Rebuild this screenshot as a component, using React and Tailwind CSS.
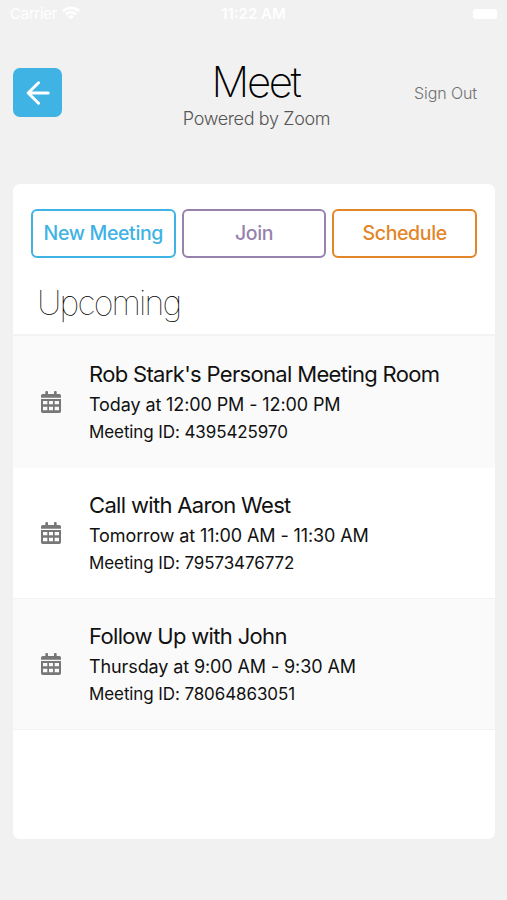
const meetings = [
  {
    title: "Rob Stark's Personal Meeting Room",
    time: "Today at 12:00 PM - 12:00 PM",
    id: "4395425970",
    row: "h-[132px] bg-[#fafafa]",
  },
  {
    title: "Call with Aaron West",
    time: "Tomorrow at 11:00 AM - 11:30 AM",
    id: "79573476772",
    row: "h-[130px] bg-white",
  },
  {
    title: "Follow Up with John",
    time: "Thursday at 9:00 AM - 9:30 AM",
    id: "78064863051",
    row: "h-[132px] border-y border-[#f3f3f3] bg-[#fafafa]",
  },
];

function CalendarIcon() {
  return (
    <svg className="ml-7 h-[22px] w-5 shrink-0" viewBox="0 0 60 66" fill="#777">
      <path d="M5 9h8V3a3 3 0 0 1 3-3h2a3 3 0 0 1 3 3v6h18V3a3 3 0 0 1 3-3h2a3 3 0 0 1 3 3v6h8a5 5 0 0 1 5 5v6H0v-6a5 5 0 0 1 5-5Z" />
      <path
        fillRule="evenodd"
        d="M0 24h60v37a5 5 0 0 1-5 5H5a5 5 0 0 1-5-5ZM6 30v10h13v-10ZM24 30v10h12v-10ZM41 30v10h13v-10ZM6 47v11h13v-11ZM24 47v11h12v-11ZM41 47v11h13v-11Z"
      />
    </svg>
  );
}

function StatusBar() {
  return (
    <div className="grid h-7 grid-cols-3 items-center px-[10px] text-[15px] leading-7 text-white">
      <div className="flex items-center gap-[5px]">
        <span className="tracking-[-0.3px]">Carrier</span>
        <svg className="mt-[-2px] h-[14px] w-[18px]" viewBox="0 0 18 14" fill="none" stroke="currentColor" strokeWidth="2.8">
          <path d="M1 5.2C5.6.7 12.4.7 17 5.2" />
          <path d="M4 8.4c2.9-2.7 7.1-2.7 10 0" />
          <path d="M9 13.6 5.9 10.500c1.800-1.600 4.400-1.600 6.200 0Z" fill="currentColor" stroke="none" />
        </svg>
      </div>
      <span className="text-center font-semibold">11:22 AM</span>
      <div className="flex justify-end">
        <div className="h-[10px] w-6 rounded-[3px] bg-white" />
      </div>
    </div>
  );
}

function Header() {
  return (
    <header className="flex h-[156px] items-start justify-between pl-[13px] pr-[30px]">
      <div className="flex flex-1 pt-10">
        <button className="flex h-[49px] w-[49px] items-center justify-center rounded-[7px] bg-[#3fb3e4]">
          <svg className="h-6 w-6" viewBox="0 0 24 24" fill="none" stroke="white" strokeWidth="3" strokeLinecap="round" strokeLinejoin="round">
            <path d="M12.500 1.800 2.200 12l10.300 10.200M2.200 12h20" />
          </svg>
        </button>
      </div>
      <div className="mr-[-21px] pt-[30px] text-center">
        <h1 className="text-[42px] font-extralight leading-[48px] tracking-[-2.4px] text-black">Meet</h1>
        <p className="ml-[2px] mt-[2px] text-[18px] font-light leading-[22px] tracking-[-0.35px] text-[#555]">Powered by Zoom</p>
      </div>
      <div className="flex flex-1 justify-end pt-[55px]">
        <span className="text-[16px] font-light leading-5 tracking-[-0.1px] text-[#707070]">Sign Out</span>
      </div>
    </header>
  );
}

export default function App() {
  return (
    <div className="h-[900px] w-full overflow-hidden bg-[#f1f1f1] font-['Inter',sans-serif]">
      <StatusBar />
      <Header />
      <main className="ml-[13px] h-[655px] w-[482px] overflow-hidden rounded-[7px] bg-white">
        <div className="flex gap-[6px] pl-[18px] pr-[18px] pt-[25px] text-[19.5px] font-medium tracking-[-0.35px]">
          <button className="h-[49px] flex-1 whitespace-nowrap rounded-[6px] border-2 border-[#3fb3e4] text-[#3fb3e4]">New Meeting</button>
          <button className="h-[49px] flex-1 rounded-[6px] border-2 border-[#9682ad] text-[#9682ad]">Join</button>
          <button className="h-[49px] flex-1 rounded-[6px] border-2 border-[#e28629] text-[#e28629]">Schedule</button>
        </div>
        <h2 className="mt-[25px] pl-6 text-[34px] font-thin leading-[40px] tracking-[-1.9px] text-black">Upcoming</h2>
        <ul className="mt-[11px] border-t-2 border-[#f3f3f3]">
          {meetings.map((m) => (
            <li key={m.id} className={"flex items-center " + m.row}>
              <CalendarIcon />
              <div className="ml-7 whitespace-nowrap text-[#111]">
                <div className="mt-[-1px] mb-px text-[22px] leading-[30px] tracking-[-0.67px]">{m.title}</div>
                <div className="text-[18px] leading-[30px] tracking-[-0.11px]">{m.time}</div>
                <div className="text-[17px] leading-[24px] tracking-[-0.1px]">Meeting ID: {m.id}</div>
              </div>
            </li>
          ))}
        </ul>
      </main>
    </div>
  );
}
